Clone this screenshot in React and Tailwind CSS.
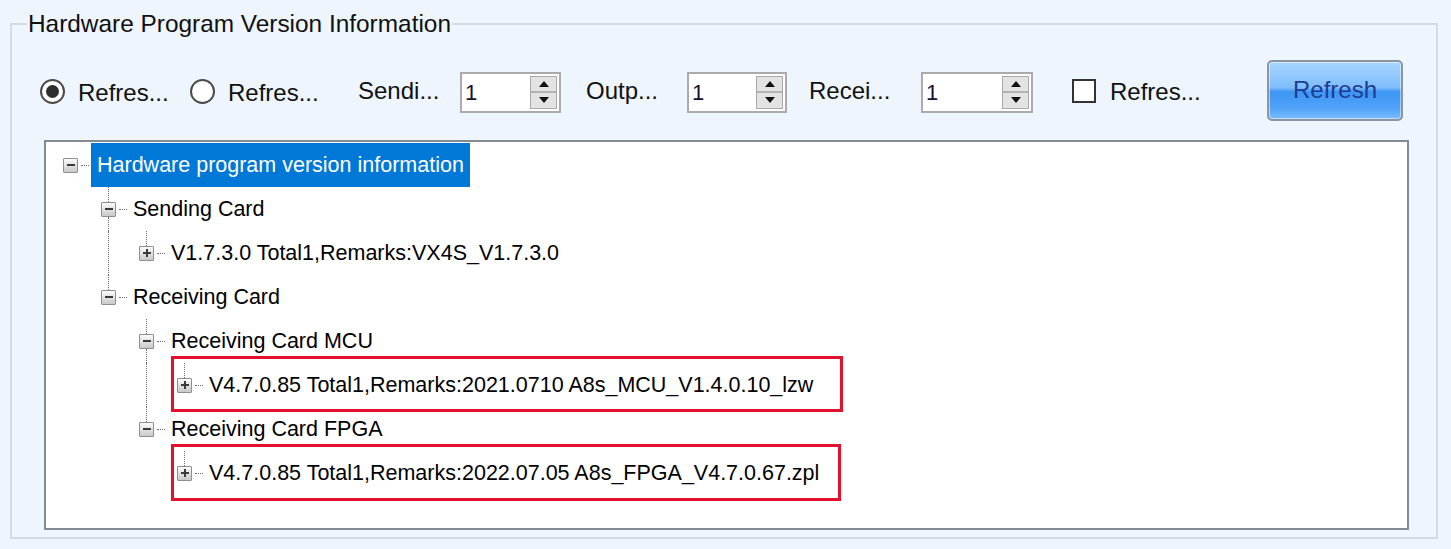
import React from "react";

const rows = [
  { d: 0, text: "Hardware program version information", exp: "-", selected: true, gutters: [], top: false, bottom: false },
  { d: 1, text: "Sending Card", exp: "-", gutters: [false], top: true, bottom: true },
  { d: 2, text: "V1.7.3.0 Total1,Remarks:VX4S_V1.7.3.0", exp: "+", gutters: [false, true], top: true, bottom: false },
  { d: 1, text: "Receiving Card", exp: "-", gutters: [false], top: true, bottom: false },
  { d: 2, text: "Receiving Card MCU", exp: "-", gutters: [false, false], top: true, bottom: true },
  { d: 3, text: "V4.7.0.85 Total1,Remarks:2021.0710 A8s_MCU_V1.4.0.10_lzw", exp: "+", gutters: [false, false, true], top: true, bottom: false },
  { d: 2, text: "Receiving Card FPGA", exp: "-", gutters: [false, false], top: true, bottom: false },
  { d: 3, text: "V4.7.0.85 Total1,Remarks:2022.07.05 A8s_FPGA_V4.7.0.67.zpl", exp: "+", gutters: [false, false, false], top: true, bottom: false },
];

function Expander({ kind }) {
  return (
    <div className="relative w-[15px] h-[15px] shrink-0 border border-[#8e8f8f] rounded-[1px] bg-gradient-to-b from-[#fbfbfb] to-[#c9c9c9] flex items-center justify-center">
      <div className="w-[8px] h-[2px] bg-[#3a3a3a]" />
      {kind === "+" && <div className="absolute w-[2px] h-[8px] bg-[#3a3a3a]" />}
    </div>
  );
}

function TreeRow({ row }) {
  return (
    <div className="flex h-[44px] items-stretch">
      {row.gutters.map((g, i) => (
        <div key={i} className="w-[38px] shrink-0 flex">
          {g && <div className="ml-[7px] h-full border-l border-dotted border-[#6f6f6f]" />}
        </div>
      ))}
      <div className="w-[15px] shrink-0 flex flex-col items-center">
        <div className={"flex-1 " + (row.top ? "border-l border-dotted border-[#6f6f6f]" : "")} />
        <Expander kind={row.exp} />
        <div className={"flex-1 " + (row.bottom ? "border-l border-dotted border-[#6f6f6f]" : "")} />
      </div>
      <div className="flex items-center">
        <div className="ml-[3px] w-[8px] border-t border-dotted border-[#6f6f6f]" />
      </div>
      <div
        className={
          "ml-[2px] flex items-center text-[21.5px] whitespace-nowrap " +
          (row.selected ? "px-[6px] bg-[#0078d7] text-white" : "px-[4px] text-[#000]")
        }
      >
        {row.text}
      </div>
    </div>
  );
}

function Radio({ checked }) {
  return (
    <div className="w-[25px] h-[25px] shrink-0 rounded-full border-2 border-[#4a4a4a] bg-white flex items-center justify-center">
      {checked && <div className="w-[13px] h-[13px] rounded-full bg-[#2e2e2e]" />}
    </div>
  );
}

function SpinBox({ w }) {
  return (
    <div className={"mt-[4px] h-[41px] shrink-0 border-2 border-[#ababab] bg-white flex items-center " + w}>
      <div className="flex-1 pl-[3px] text-[22px] text-[#1a1030]">1</div>
      <div className="mr-[2px] w-[27px] h-[33px] flex flex-col border border-[#a9a9a9]">
        <div className="flex-1 bg-[#e3e3e3] border-b-2 border-[#b3b3b3] flex items-center justify-center">
          <svg width="10" height="6" viewBox="0 0 10 6"><path d="M5 0L10 6H0Z" fill="#111" /></svg>
        </div>
        <div className="flex-1 bg-[#e3e3e3] flex items-center justify-center">
          <svg width="10" height="6" viewBox="0 0 10 6"><path d="M0 0H10L5 6Z" fill="#111" /></svg>
        </div>
      </div>
    </div>
  );
}

export default function App() {
  return (
    <div className="w-[1451px] h-[549px] bg-[#eef5fd] pt-[12px] font-['Liberation_Sans',Arial,sans-serif] text-[#111]">
      <fieldset className="ml-[10px] w-[1428px] h-[527px] border-2 border-[#d3dbe3]">
        <legend className="ml-[15px] px-[1px] text-[24.4px] leading-[24px] text-[#111]">
          Hardware Program Version Information
        </legend>
        <div className="mt-[24px] h-[60px] flex items-center text-[24px]">
          <div className="ml-[28px] mt-[2px]"><Radio checked /></div>
          <div className="ml-[13px] w-[112px] mt-[5px]">Refres...</div>
          <div className="mt-[2px]"><Radio /></div>
          <div className="ml-[13px] w-[130px] mt-[5px]">Refres...</div>
          <div className="w-[102px] mt-[1px]">Sendi...</div>
          <SpinBox w="w-[101px]" />
          <div className="ml-[25px] w-[101px] mt-[1px]">Outp...</div>
          <SpinBox w="w-[100px]" />
          <div className="ml-[22px] w-[112px] mt-[1px]">Recei...</div>
          <SpinBox w="w-[112px]" />
          <div className="ml-[39px] mt-[2px] w-[24px] h-[24px] border-2 border-[#333] bg-white shrink-0" />
          <div className="ml-[14px] w-[157px] mt-[3px]">Refres...</div>
          <button className="w-[136px] h-[61px] rounded-[5px] border-2 border-[#8a96a4] bg-[linear-gradient(to_bottom,#a9d5ff_0%,#7dbdfc_45%,#3d95f4_52%,#4fa2f8_80%,#7cbcfc_100%)] text-[#1d3c92] text-[24px] shadow-[inset_0_0_0_1px_rgba(255,255,255,0.5)]">
            Refresh
          </button>
        </div>
        <div className="relative mt-[20px] ml-[32px] w-[1365px] h-[390px] border-2 border-[#868a92] bg-white pt-[1px] pl-[17px]">
          {rows.map((r, i) => (
            <TreeRow key={i} row={r} />
          ))}
          <div className="absolute left-[125px] top-[214px] w-[672px] h-[56px] border-[3px] border-[#e5102d]" />
          <div className="absolute left-[125px] top-[302px] w-[670px] h-[57px] border-[3px] border-[#e5102d]" />
        </div>
      </fieldset>
    </div>
  );
}
